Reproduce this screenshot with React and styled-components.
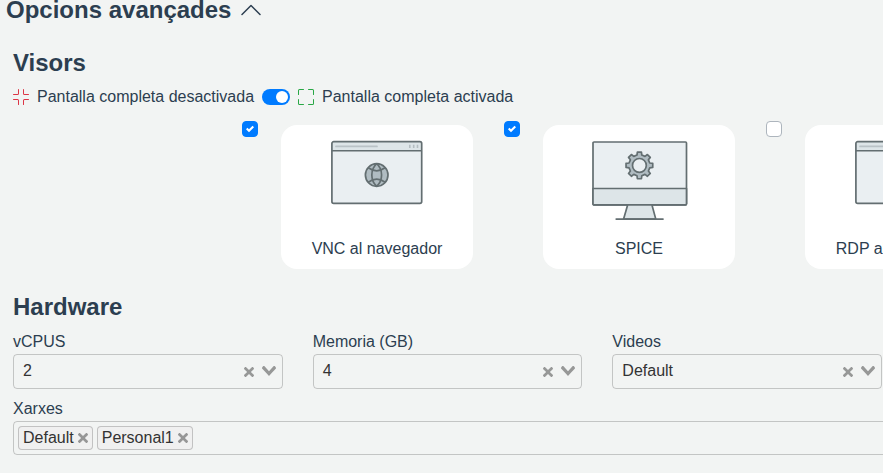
import React from "react";
import styled, { createGlobalStyle } from "styled-components";
import { BsChevronUp, BsFullscreen, BsFullscreenExit } from "react-icons/bs";

const GlobalStyle = createGlobalStyle`
  *, *::before, *::after { box-sizing: border-box; }
  body {
    margin: 0;
    background: #f2f4f3;
    color: #2c3e50;
    font: 16px/24px "Liberation Sans", Arial, sans-serif;
    overflow: hidden;
  }
  svg { display: block; flex: none; }
`;

const Page = styled.main`
  width: 883px;
  height: 473px;
  overflow: hidden;
`;

const Title = styled.h4`
  display: flex;
  align-items: center;
  gap: 8px;
  height: 29px;
  margin: -5px 0 24px 6px;
  font-size: 24px;
  line-height: 29px;
  font-weight: 700;
`;

const Section = styled.section`
  padding-left: 13px;
`;

const Heading = styled.h4`
  margin: 0 0 ${(p) => p.$gap}px;
  font-size: 24px;
  line-height: 29px;
  font-weight: 700;
`;

const FullscreenRow = styled.div`
  display: flex;
  align-items: center;
  height: 24px;
  white-space: nowrap;
`;

const ModeLabel = styled.span`
  margin: 0 8px;
`;

const ModeIcon = styled.span`
  color: ${(p) => p.$color};
`;

const Switch = styled.span`
  display: flex;
  justify-content: flex-end;
  align-items: center;
  width: 28px;
  height: 16px;
  margin-right: 8px;
  padding: 2px;
  border-radius: 8px;
  background: #007bff;
`;

const Knob = styled.span`
  width: 12px;
  height: 12px;
  border-radius: 50%;
  background: #fff;
`;

const ViewerRow = styled.div`
  display: flex;
  gap: 31px;
  margin: 12px 0 23px 229px;
`;

const Viewer = styled.div`
  display: flex;
  flex: none;
  gap: 23px;
`;

const Checkbox = styled.span`
  display: grid;
  place-items: center;
  width: 16px;
  height: 16px;
  border: 1px solid ${(p) => (p.$checked ? "#007bff" : "#adb5bd")};
  border-radius: 4px;
  background: ${(p) => (p.$checked ? "#007bff" : "#fff")};
`;

const Card = styled.div`
  display: flex;
  flex-direction: column;
  align-items: center;
  justify-content: space-between;
  width: 192px;
  height: 144px;
  margin-top: 4px;
  padding: 15px 0 8px;
  border-radius: 16px;
  background: #fff;
`;

const Fields = styled.div`
  display: grid;
  grid-template-columns: repeat(3, 1fr);
  gap: 30px;
  width: 869px;
  margin-bottom: 8px;
`;

const Label = styled.div`
  height: 24px;
`;

const SelectBox = styled.div`
  display: flex;
  align-items: center;
  height: 35px;
  padding: 0 6px 2px 9px;
  border: 1px solid rgba(60, 60, 60, 0.26);
  border-radius: 4px;
  color: #333;
`;

const Value = styled.span`
  flex: 1;
`;

const Indicators = styled.span`
  display: flex;
  gap: 8px;
  align-items: flex-start;
`;

const ClearIcon = styled.span`
  padding-top: 3px;
`;

const ArrowIcon = styled.span`
  padding-top: 2px;
`;

const TagBox = styled.div`
  display: flex;
  gap: 4px;
  width: 1170px;
  height: 34px;
  padding: 4px;
  border: 1px solid rgba(60, 60, 60, 0.26);
  border-radius: 4px;
`;

const Tag = styled.span`
  display: flex;
  align-items: center;
  gap: 4px;
  height: 24px;
  padding: 0 4px;
  border: 1px solid rgba(60, 60, 60, 0.26);
  border-radius: 4px;
  background: #f0f0f0;
  color: #333;
`;

const Cross = () => (
  <svg width="10" height="10" fill="rgba(60,60,60,.5)">
    <path d="M6.895455 5l2.842897-2.842898c.348864-.348863.348864-.914488 0-1.263636L9.106534.261648c-.348864-.348864-.914489-.348864-1.263636 0L5 3.104545 2.157102.261648c-.348863-.348864-.914488-.348864-1.263636 0L.261648.893466c-.348864.348864-.348864.914489 0 1.263636L3.104545 5 .261648 7.842898c-.348864.348863-.348864.914488 0 1.263636l.631818.631818c.348864.348864.914773.348864 1.263636 0L5 6.895455l2.842898 2.842897c.348863.348864.914772.348864 1.263636 0l.631818-.631818c.348864-.348864.348864-.914489 0-1.263636L6.895455 5z" />
  </svg>
);

const Arrow = () => (
  <svg width="14" height="10" fill="rgba(60,60,60,.5)">
    <path d="M9.211364 7.59931l4.48338-4.867229c.407008-.441854.407008-1.158247 0-1.60046l-.73712-.80023c-.407008-.441854-1.066904-.441854-1.474243 0L7 5.198617 2.51662.33139c-.407008-.441853-1.066904-.441853-1.474243 0l-.737121.80023c-.407008.441854-.407008 1.158248 0 1.600461l4.48338 4.867228L7 10l2.211364-2.40069z" />
  </svg>
);

const Check = () => (
  <svg width="8" height="8" viewBox="0 0 8 8" fill="#fff">
    <path d="M6.564.75l-3.59 3.612-1.538-1.55L0 4.26l2.974 2.99L8 2.193z" />
  </svg>
);

const BrowserIcon = () => (
  <svg width="92" height="65" viewBox="0 0 92 65">
    <rect x=".9" y="1.7" width="89.8" height="61.6" rx="1.8" fill="#eaeff2" />
    <path d="M.9 10.7V3.5q0-1.8 1.8-1.8h86.2q1.8 0 1.8 1.8v7.2z" fill="#dde5e8" />
    <path d="M.9 10.7h89.8" stroke="#636e71" strokeWidth="1.6" />
    <rect x=".9" y="1.7" width="89.8" height="61.6" rx="1.8" fill="none" stroke="#636e71" strokeWidth="1.7" />
    <path d="M5 6.4h41" stroke="#b9c2c6" strokeWidth="1.7" strokeLinecap="round" />
    <path d="M78.8 4.8v3.2M82.7 4.8v3.2M86.5 4.8v3.2" stroke="#b4bdc1" strokeWidth="1.6" />
    <g fill="none" stroke="#636e71" strokeWidth="1.7">
      <circle cx="45.7" cy="35" r="11.3" fill="#b0bcc2" />
      <path d="M45.7 23.7C39.2 29.5 39.2 40.5 45.7 46.3M45.7 23.7C52.2 29.5 52.2 40.5 45.7 46.3" />
      <path d="M37.3 27.8q8.4 6 16.8 0M37.3 42.2q8.4-6 16.8 0" />
    </g>
  </svg>
);

const TEETH = 8;
const gearPath = Array.from({ length: TEETH }, (_, i) => {
  const mid = (i * 2 * Math.PI) / TEETH - Math.PI / 2;
  return [[-0.23, 10.6], [-0.15, 13.5], [0.15, 13.5], [0.23, 10.6]]
    .map(([a, r]) => `${(48.4 + r * Math.cos(mid + a)).toFixed(2)} ${(25.4 + r * Math.sin(mid + a)).toFixed(2)}`)
    .join("L");
}).join("L");

const MonitorIcon = () => (
  <svg width="97" height="81" viewBox="0 0 97 81" stroke="#636e71" strokeWidth="1.7" strokeLinejoin="round" strokeLinecap="round">
    <rect x="2" y="2" width="93.5" height="62.8" rx="1" fill="#eaeff2" />
    <path d="M2 48.5h93.5v15.3q0 1-1 1H3q-1 0-1-1z" fill="#dde5e8" />
    <path d="M36.7 64.8h24.2l3.9 14.3H32.6z" fill="#dde5e8" />
    <path d="M25.2 79.1h46.8" />
    <path d={`M${gearPath}Z`} fill="#b0bcc2" />
    <circle cx="48.4" cy="25.4" r="6.9" fill="#eaeff2" />
  </svg>
);

const viewers = [
  { name: "VNC al navegador", checked: true, Icon: BrowserIcon },
  { name: "SPICE", checked: true, Icon: MonitorIcon },
  { name: "RDP al navegador", checked: false, Icon: BrowserIcon },
];

const fields = [
  { label: "vCPUS", value: "2" },
  { label: "Memoria (GB)", value: "4" },
  { label: "Videos", value: "Default" },
];

export default function App() {
  return (
    <Page>
      <GlobalStyle />
      <Title>
        Opcions avançades
        <BsChevronUp size={24} />
      </Title>
      <Section>
        <Heading $gap={8}>Visors</Heading>
        <FullscreenRow>
          <ModeIcon $color="#dc3545"><BsFullscreenExit size={16} /></ModeIcon>
          <ModeLabel>Pantalla completa desactivada</ModeLabel>
          <Switch><Knob /></Switch>
          <ModeIcon $color="#28a745"><BsFullscreen size={16} /></ModeIcon>
          <ModeLabel>Pantalla completa activada</ModeLabel>
        </FullscreenRow>
        <ViewerRow>
          {viewers.map(({ name, checked, Icon }) => (
            <Viewer key={name}>
              <Checkbox $checked={checked}>{checked && <Check />}</Checkbox>
              <Card>
                <Icon />
                <span>{name}</span>
              </Card>
            </Viewer>
          ))}
        </ViewerRow>
      </Section>
      <Section>
        <Heading $gap={9}>Hardware</Heading>
        <Fields>
          {fields.map(({ label, value }) => (
            <div key={label}>
              <Label>{label}</Label>
              <SelectBox>
                <Value>{value}</Value>
                <Indicators>
                  <ClearIcon><Cross /></ClearIcon>
                  <ArrowIcon><Arrow /></ArrowIcon>
                </Indicators>
              </SelectBox>
            </div>
          ))}
        </Fields>
        <Label>Xarxes</Label>
        <TagBox>
          <Tag>Default<Cross /></Tag>
          <Tag>Personal1<Cross /></Tag>
        </TagBox>
      </Section>
    </Page>
  );
}
